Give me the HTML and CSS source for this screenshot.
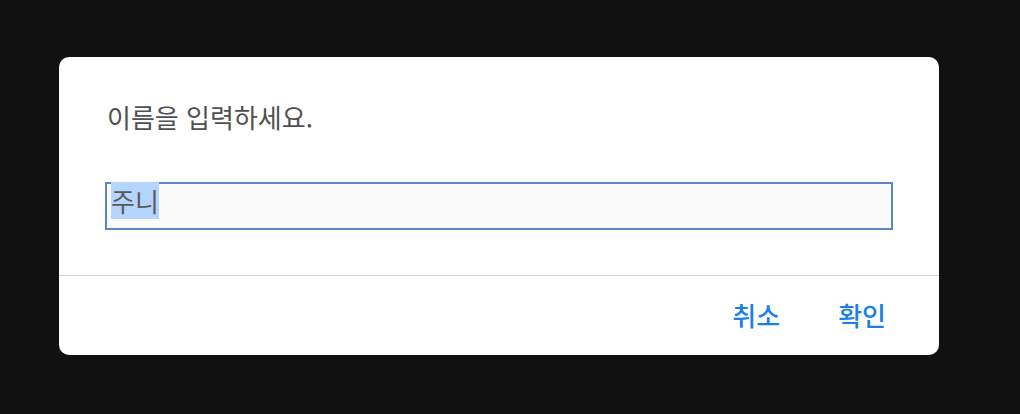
FILE: index.html
```html
<!DOCTYPE html>
<html lang="ko">
<head>
<meta charset="utf-8">
<link rel="stylesheet" href="styles.css">
</head>
<body>
<div class="dialog">
  <div class="body">
    <p class="message">이름을 입력하세요.</p>
    <div class="field"><span class="sel">주니</span></div>
  </div>
  <div class="footer">
    <button class="btn">취소</button>
    <button class="btn">확인</button>
  </div>
</div>
</body>
</html>
```

FILE: styles.css
```css
html, body {
  margin: 0;
  padding: 0;
  background: #111111;
  height: 100%;
}
body {
  padding-top: 57px;
  padding-left: 59px;
  box-sizing: border-box;
  font-family: "Noto Sans CJK KR", "Noto Sans", sans-serif;
}
.dialog {
  width: 880px;
  height: 298px;
  background: #ffffff;
  border-radius: 10px;
  display: flex;
  flex-direction: column;
  overflow: hidden;
}
.body {
  padding: 41px 46px 0 46px;
  height: 219px;
  box-sizing: border-box;
  border-bottom: 1px solid #cfcfcf;
}
.message {
  margin: 0 0 0 2px;
  font-size: 26px;
  line-height: 38px;
  color: #505050;
}
.field {
  margin-top: 46px;
  height: 48px;
  box-sizing: border-box;
  border: 2px solid #5b86c6;
  background: #fafafa;
  padding: 0 4px;
  font-size: 26px;
  line-height: 34px;
  color: #5a5a5a;
}
.sel {
  background: #b4d5fd;
}
.footer {
  flex: 1;
  display: flex;
  justify-content: flex-end;
  align-items: center;
  gap: 34px;
  padding-right: 41px;
  padding-bottom: 3px;
}
.btn {
  border: 0;
  background: none;
  font-family: inherit;
  font-size: 26px;
  font-weight: 500;
  color: #1b7fe8;
  padding: 0 12px;
  cursor: pointer;
}
```
